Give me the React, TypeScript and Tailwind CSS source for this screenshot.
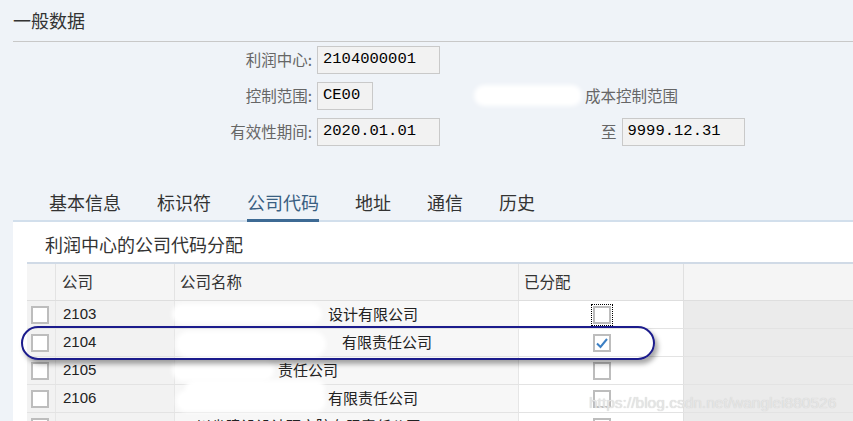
import React from "react";

const cjk = "font-['Noto_Sans_CJK_SC','Noto_Sans',sans-serif]";
const mono = "font-['Liberation_Mono','DejaVu_Sans_Mono',monospace]";

const tabs = ["基本信息", "标识符", "公司代码", "地址", "通信", "历史"];

type Row = {
  code: string;
  name: string;
  nameOffset: number;
  checked: boolean;
  focus?: boolean;
};

const rows: Row[] = [
  { code: "2103", name: "设计有限公司", nameOffset: 147, checked: false, focus: true },
  { code: "2104", name: "有限责任公司", nameOffset: 161, checked: true },
  { code: "2105", name: "责任公司", nameOffset: 97, checked: false },
  { code: "2106", name: "有限责任公司", nameOffset: 147, checked: false },
  { code: "2107", name: "四川省建设设计研究院有限责任公司", nameOffset: 0, checked: false },
];

const Field = ({ value, width }: { value: string; width: string }) => (
  <div
    className={`${width} h-[28px] flex items-center pl-[5px] bg-[#f2f2f2] border border-[#c9c9c9] text-[15.5px] text-black ${mono}`}
  >
    {value}
  </div>
);

const Box = ({ checked = false }: { checked?: boolean }) => (
  <div className="w-[18px] h-[18px] border-2 border-[#bdbdbd] bg-white flex items-center justify-center">
    {checked && (
      <svg width="14" height="12" viewBox="0 0 14 12">
        <path d="M2 6.5 L5.5 10 L12 2" fill="none" stroke="#3b7fc4" strokeWidth="2" />
      </svg>
    )}
  </div>
);

export default function App() {
  return (
    <div className={`relative w-[853px] h-[421px] overflow-hidden bg-[#eff3f8] ${cjk}`}>
      {/* 标题 */}
      <div className="h-[41px] flex items-center pl-[13px] text-[18px] text-[#333]">一般数据</div>
      <div className="ml-[13px] h-px bg-[#c8c8c8]" />

      {/* 表单 */}
      <div className="pt-[4px] flex flex-col gap-[8px]">
        <div className="flex items-center">
          <div className="w-[312px] text-right text-[15.5px] text-[#666]">利润中心:</div>
          <div className="ml-[5px]">
            <Field value="2104000001" width="w-[123px]" />
          </div>
        </div>
        <div className="flex items-center">
          <div className="w-[312px] text-right text-[15.5px] text-[#666]">控制范围:</div>
          <div className="ml-[5px]">
            <Field value="CE00" width="w-[56px]" />
          </div>
          <div className="ml-[212px] text-[15.5px] text-[#666]">成本控制范围</div>
        </div>
        <div className="flex items-center">
          <div className="w-[312px] text-right text-[15.5px] text-[#666]">有效性期间:</div>
          <div className="ml-[5px]">
            <Field value="2020.01.01" width="w-[123px]" />
          </div>
          <div className="ml-[161px] text-[15.5px] text-[#666]">至</div>
          <div className="ml-[5px]">
            <Field value="9999.12.31" width="w-[123px]" />
          </div>
        </div>
      </div>

      {/* 页签 */}
      <div className="mt-[39px] ml-[13px] h-[37px] border-b-2 border-[#d2dfec] flex pl-[36px] gap-[36px]">
        {tabs.map((t) => (
          <div
            key={t}
            className={
              t === "公司代码"
                ? "h-[37px] flex items-center text-[18px] text-[#3a5f82] border-b-[3px] border-[#3d6a94]"
                : "h-[37px] flex items-center text-[18px] text-[#333] pb-[3px]"
            }
          >
            {t}
          </div>
        ))}
      </div>

      {/* 公司代码分配 */}
      <div className="ml-[13px] bg-white h-[200px]">
        <div className="pl-[32px] pt-[10px] h-[40px] text-[18px] leading-[24px] text-[#333]">
          利润中心的公司代码分配
        </div>
        <div className="ml-[14px] border-t-2 border-[#d0dae6]">
          <div className="grid grid-cols-[29px_119px_344px_165px_1fr] h-[37px] bg-[#f5f5f5] border-b border-[#dedede] text-[15.5px] text-[#333]">
            <div className="border-r border-[#e3e3e3]" />
            <div className="border-r border-[#e3e3e3] flex items-center pl-[6px]">公司</div>
            <div className="border-r border-[#e3e3e3] flex items-center pl-[5px]">公司名称</div>
            <div className="border-r border-[#e0e0e0] flex items-center pl-[5px]">已分配</div>
            <div />
          </div>
          {rows.map((r) => (
            <div
              key={r.code}
              className="grid grid-cols-[29px_119px_344px_165px_1fr] h-[28px] border-b border-[#e3e3e3] text-[15px] text-[#222]"
            >
              <div className="bg-[#f2f2f2] border-r border-[#e6e6e6] flex items-center pl-[4px]">
                <Box />
              </div>
              <div className="bg-[#f2f2f2] border-r border-[#e6e6e6] flex items-center pl-[7px] font-['Liberation_Sans',Arial,sans-serif]">
                {r.code}
              </div>
              <div className="bg-[#f7f7f7] border-r border-[#e6e6e6] flex items-center pl-[6px] whitespace-nowrap overflow-hidden">
                <span style={{ marginLeft: r.nameOffset }}>{r.name}</span>
              </div>
              <div className="bg-white border-r border-[#e0e0e0] flex items-center justify-center pl-[2px]">
                <div className={r.focus ? "outline-1 outline-dotted outline-black outline-offset-[1px]" : ""}>
                  <Box checked={r.checked} />
                </div>
              </div>
              <div className="bg-[#ebebeb]" />
            </div>
          ))}
        </div>
      </div>

      {/* 涂抹遮挡 */}
      <div className="absolute left-[474px] top-[85px] w-[108px] h-[21px] rounded-full bg-white blur-[2px]" />
      <div className="absolute left-[172px] top-[304px] w-[150px] h-[20px] rounded-full bg-white blur-[2px]" />
      <div className="absolute left-[176px] top-[331px] w-[150px] h-[26px] rounded-full bg-white blur-[2px]" />
      <div className="absolute left-[172px] top-[359px] w-[102px] h-[22px] rounded-full bg-white blur-[2px]" />
      <div className="absolute left-[185px] top-[380px] w-[140px] h-[18px] rounded-full bg-white blur-[2px]" />
      <div className="absolute left-[176px] top-[390px] w-[150px] h-[22px] rounded-full bg-white blur-[2px]" />

      {/* 标注圈 */}
      <div className="absolute left-[21px] top-[326px] w-[634px] h-[34px] rounded-full border-2 border-[#1c1c8c] shadow-[3px_4px_5px_rgba(0,0,0,0.35)]" />

      {/* 水印 */}
      <div className="absolute left-[589px] top-[391px] text-[15.5px] text-[#e6e6e6] font-['Liberation_Sans',Arial,sans-serif] [text-shadow:0_0_1px_#c8c8c8]">
        https://blog.csdn.net/wanglei880526
      </div>
    </div>
  );
}
